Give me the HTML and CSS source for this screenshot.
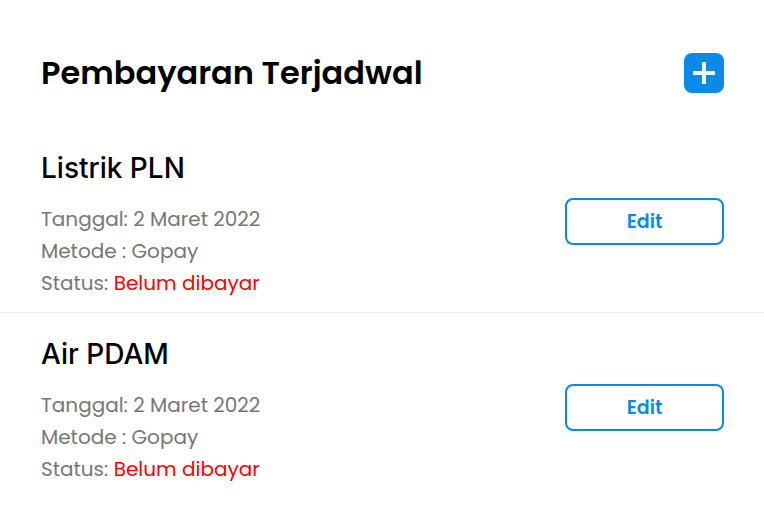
FILE: index.html
```
<!DOCTYPE html>
<html lang="id">
<head>
<meta charset="utf-8">
<title>Pembayaran Terjadwal</title>
<link rel="stylesheet" href="styles.css">
</head>
<body>
<div class="page">
  <header class="header">
    <h1 class="title">Pembayaran Terjadwal</h1>
    <button class="add-btn" aria-label="Tambah">
      <svg width="24" height="24" viewBox="0 0 24 24"><path d="M12 1v22M1 12h22" stroke="#fff" stroke-width="4" stroke-linecap="butt"/></svg>
    </button>
  </header>
  <section class="item">
    <div class="info">
      <h2 class="item-title">Listrik PLN</h2>
      <div class="details">
        <div class="line">Tanggal: 2 Maret 2022</div>
        <div class="line">Metode : Gopay</div>
        <div class="line">Status: <span class="unpaid">Belum dibayar</span></div>
      </div>
    </div>
    <button class="edit-btn">Edit</button>
  </section>
  <section class="item">
    <div class="info">
      <h2 class="item-title">Air PDAM</h2>
      <div class="details">
        <div class="line">Tanggal: 2 Maret 2022</div>
        <div class="line">Metode : Gopay</div>
        <div class="line">Status: <span class="unpaid">Belum dibayar</span></div>
      </div>
    </div>
    <button class="edit-btn">Edit</button>
  </section>
</div>
</body>
</html>
```
FILE: styles.css
```
* { box-sizing: border-box; }
html, body { margin: 0; padding: 0; background: #fff; }
body { font-family: "Poppins", "Inter", "Open Sans", sans-serif; color: #000; }
.page { width: 764px; }
.header {
  display: flex; align-items: center; justify-content: space-between;
  padding: 53px 40px 33px 41px;
}
.title { margin: 0; font-size: 32px; font-weight: 600; line-height: 40px; }
.add-btn {
  width: 40px; height: 40px; border: 0; border-radius: 8px; background: #0a8ae8;
  display: flex; align-items: center; justify-content: center; padding: 0;
}
.item {
  display: flex; align-items: center; justify-content: space-between;
  padding: 24px 40px 13px 41px;
}
.item + .item { border-top: 1px solid #efefef; padding-top: 23px; }
.item-title { margin: 0; font-family: "Inter", sans-serif; font-size: 28px; font-weight: 500; line-height: 36px; }
.details { margin-top: 17px; }
.line { font-size: 20px; line-height: 32px; color: #777; }
.unpaid { color: #ff0000; }
.edit-btn {
  width: 159px; height: 47px; border: 2px solid #0a8ae8; border-radius: 8px; background: #fff;
  color: #0a8ae8; font-family: inherit; font-size: 19px; font-weight: 600; margin-top: -6px;
}
```
